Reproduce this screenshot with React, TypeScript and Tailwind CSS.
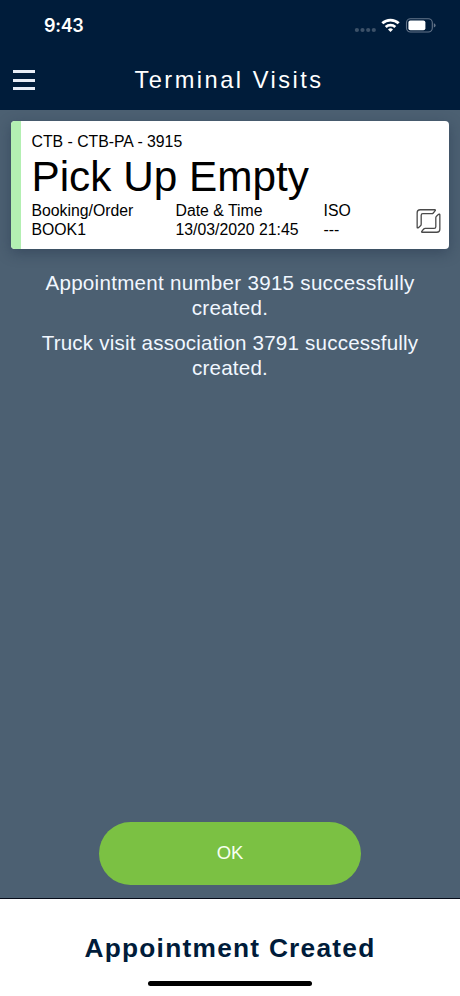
import React from "react";

function StatusIcons() {
  return (
    <svg width="84" height="20" viewBox="0 0 84 20" aria-hidden="true">
      <g fill="#3c5168">
        <circle cx="3.9" cy="15" r="2.1" />
        <circle cx="9.5" cy="15" r="2.1" />
        <circle cx="15.2" cy="15" r="2.1" />
        <circle cx="20.8" cy="15" r="2.1" />
      </g>
      <g fill="none" stroke="#fff" strokeWidth="2.8">
        <path d="M29.3 8.3a12 12 0 0 1 16.4 0" />
        <path d="M32.7 12a7.2 7.2 0 0 1 9.6 0" />
      </g>
      <path d="M37.5 17l-2.5-2.5a3.6 3.6 0 0 1 5 0z" fill="#fff" />
      <rect x="53.5" y="3.8" width="25.8" height="13.2" rx="4" fill="none" stroke="#64758a" strokeWidth="1.1" />
      <rect x="55.4" y="5.6" width="17" height="9.6" rx="2" fill="#fff" />
      <path d="M80.8 8.2q1.8.6 1.8 2.2t-1.8 2.2z" fill="#64758a" />
    </svg>
  );
}

function ContainerIcon() {
  return (
    <svg width="25" height="26" viewBox="0 0 26 26" fill="none" stroke="#4a4a4a" strokeWidth="1.35" strokeLinejoin="round" aria-hidden="true">
      <path d="M4.4 1.3H19.4Q20.8 1.3 19.8 2.5L18 4.7Q17.4 5.4 16.4 5.4H7.1Q5.4 5.4 5.4 7.1V16.4Q5.4 17.4 4.7 18L2.5 19.9Q1.2 20.8 1.2 19.4V4.4Q1.2 1.3 4.4 1.3Z" />
      <path d="M21.6 24.7H6.6Q5.2 24.7 6.2 23.5L8 21.3Q8.6 20.6 9.6 20.6H18.9Q20.6 20.6 20.6 18.9V9.6Q20.6 8.6 21.3 8L23.5 6.1Q24.8 5.2 24.8 6.6V21.6Q24.8 24.7 21.6 24.7Z" />
    </svg>
  );
}

function Field({ label, value, className }: { label: string; value: string; className: string }) {
  return (
    <div className={className}>
      <div>{label}</div>
      <div>{value}</div>
    </div>
  );
}

export default function App() {
  return (
    <div className="flex h-[996px] w-[460px] flex-col overflow-hidden bg-[#4c6072] font-['Liberation_Sans',Arial,sans-serif]">
      <header className="h-[110px] shrink-0 bg-[#001c3a] text-white">
        <div className="flex h-[50px] items-start justify-between pt-[15px] pr-[23px] pl-[44px]">
          <span className="font-['Inter',sans-serif] text-[18px] leading-[22px] font-semibold tracking-[-0.3px]">9:43</span>
          <StatusIcons />
        </div>
        <div className="grid h-[60px] grid-cols-[48px_1fr_48px] items-center">
          <button aria-label="Menu" className="flex flex-col gap-[5.5px] pl-[13px]">
            <span className="h-[3px] w-[22px] bg-[#e8edf6]" />
            <span className="h-[3px] w-[22px] bg-[#e8edf6]" />
            <span className="h-[3px] w-[22px] bg-[#e8edf6]" />
          </button>
          <h1 className="pr-[2px] text-center text-[23.6px] leading-[28px] tracking-[2.5px] whitespace-nowrap">Terminal Visits</h1>
        </div>
      </header>

      <main className="flex flex-1 flex-col px-[11px] pt-[11px]">
        <section className="flex h-[128px] w-[438px] shrink-0 overflow-hidden rounded-[4px] bg-white text-black shadow-[0_4px_14px_rgba(20,35,60,0.35)]">
          <div className="w-[10px] bg-[#b3efb2]" />
          <div className="flex-1 pt-[11px] pl-[10.5px] text-[15.8px] leading-[19px]">
            <div>CTB - CTB-PA - 3915</div>
            <div className="h-[50px] text-[42.3px] leading-[52px] whitespace-nowrap">Pick Up Empty</div>
            <div className="flex">
              <Field className="w-[144px]" label="Booking/Order" value="BOOK1" />
              <Field className="w-[148px]" label="Date & Time" value="13/03/2020 21:45" />
              <Field className="w-[92px]" label="ISO" value="---" />
              <div className="pt-[7px]">
                <ContainerIcon />
              </div>
            </div>
          </div>
        </section>
        <div className="mt-[21px] text-center text-[20.6px] leading-[25px] text-[#f1f7ff]">
          <p className="mb-[10px] tracking-[0.27px]">Appointment number 3915 successfully<br />created.</p>
          <p className="tracking-[0.19px]">Truck visit association 3791 successfully<br />created.</p>
        </div>
        <button className="mx-auto mt-auto mb-[13px] h-[63px] w-[262px] rounded-full bg-[#7bc143] pb-[1px] text-[18.5px] text-[#f7fff0]">OK</button>
      </main>

      <footer className="flex h-[98px] shrink-0 flex-col items-center border-t-[1.5px] border-[#050b18] bg-white">
        <h2 className="mt-[33px] text-[26.3px] leading-[32px] font-bold tracking-[1.25px] text-[#001c3a]">Appointment Created</h2>
        <div className="mt-[17px] h-[5px] w-[164px] rounded-full bg-black" />
      </footer>
    </div>
  );
}
